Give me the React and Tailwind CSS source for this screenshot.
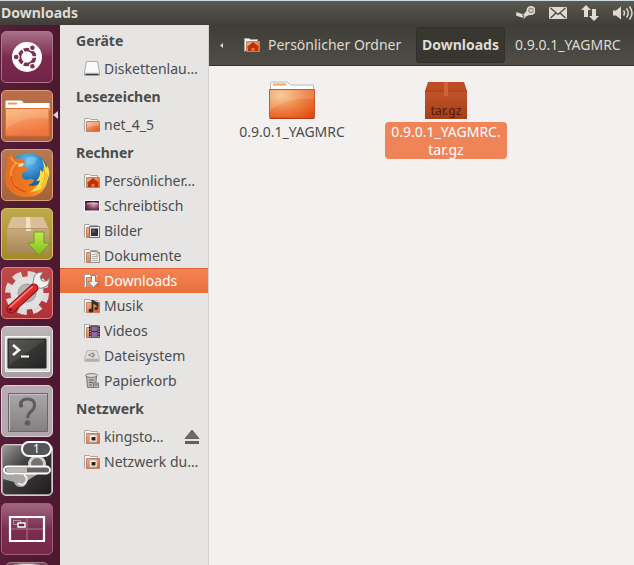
import React from "react";

/* ---------- shared gradients ---------- */

function Gradients() {
  return (
    <svg className="absolute size-0" aria-hidden="true">
      <defs>
        <radialGradient id="folderFill" cx="0.25" cy="0.2" r="1">
          <stop offset="0" stopColor="#f7c48c" />
          <stop offset="0.5" stopColor="#ee8444" />
          <stop offset="1" stopColor="#e34a12" />
        </radialGradient>
        <linearGradient id="smallFolder" x1="0" y1="0" x2="1" y2="1">
          <stop offset="0" stopColor="#f4b58a" />
          <stop offset="1" stopColor="#e2531b" />
        </linearGradient>
        <linearGradient id="launcherFolder" x1="0" y1="0" x2="0.3" y2="1">
          <stop offset="0" stopColor="#fbb775" />
          <stop offset="1" stopColor="#ef7440" />
        </linearGradient>
        <radialGradient id="foxGlobe" cx="0.5" cy="0.2" r="0.8">
          <stop offset="0" stopColor="#6ac4ee" />
          <stop offset="0.5" stopColor="#2478bd" />
          <stop offset="1" stopColor="#173d7c" />
        </radialGradient>
        <linearGradient id="foxBody" x1="0" y1="0" x2="1" y2="0">
          <stop offset="0" stopColor="#ea6c20" />
          <stop offset="0.6" stopColor="#ee7a1e" />
          <stop offset="1" stopColor="#f9c432" />
        </linearGradient>
        <linearGradient id="boxFront" x1="0" y1="0" x2="0" y2="1">
          <stop offset="0" stopColor="#cbab7b" />
          <stop offset="1" stopColor="#a98758" />
        </linearGradient>
        <linearGradient id="greenArrow" x1="0" y1="0" x2="0" y2="1">
          <stop offset="0" stopColor="#c5ea52" />
          <stop offset="1" stopColor="#7cbf1b" />
        </linearGradient>
        <linearGradient id="termFill" x1="0" y1="0" x2="1" y2="1">
          <stop offset="0" stopColor="#4a4a48" />
          <stop offset="1" stopColor="#232323" />
        </linearGradient>
        <linearGradient id="grayFill" x1="0" y1="0" x2="0" y2="1">
          <stop offset="0" stopColor="#a9a7a8" />
          <stop offset="1" stopColor="#828081" />
        </linearGradient>
        <linearGradient id="steamFill" x1="0" y1="0" x2="1" y2="1">
          <stop offset="0" stopColor="#9a9998" />
          <stop offset="0.4" stopColor="#403e3d" />
          <stop offset="1" stopColor="#1e1c1c" />
        </linearGradient>
        <linearGradient id="tarFill" x1="0" y1="0" x2="0" y2="1">
          <stop offset="0" stopColor="#c4542a" />
          <stop offset="1" stopColor="#a23f18" />
        </linearGradient>
        <radialGradient id="deskFill" cx="0.6" cy="0.4" r="0.7">
          <stop offset="0" stopColor="#d7a0b4" />
          <stop offset="0.5" stopColor="#8a4564" />
          <stop offset="1" stopColor="#3d1730" />
        </radialGradient>
      </defs>
    </svg>
  );
}

/* ---------- sidebar icons ---------- */

function Icon16({ children }) {
  return (
    <svg viewBox="0 0 16 16" className="size-4 shrink-0" aria-hidden="true">
      {children}
    </svg>
  );
}

function FolderBase({ children }) {
  return (
    <Icon16>
      <path d="M.5 14.5v-13h5l1 1h7v3" fill="#fbfaf9" stroke="#aaa5a1" />
      <path d="M2.5 4.5h13v10h-13z" fill="url(#smallFolder)" stroke="#bd8263" />
      {children}
    </Icon16>
  );
}

function HomeIcon() {
  return (
    <FolderBase>
      <path d="M3 10 9 5l6 5-1 .8V14h-3.500v-3h-3v3H4v-3.200z" fill="#b8330b" />
    </FolderBase>
  );
}

function PlainFolderIcon() {
  return (
    <FolderBase>
      <path d="M3 5h12v4q-6-1-12 2z" fill="#fff" opacity=".25" />
    </FolderBase>
  );
}

function DriveIcon() {
  return (
    <Icon16>
      <path d="M2.500 .5h11l2 10.500v3.500H.5V11z" fill="#fafafa" stroke="#aaa" />
      <path d="M1 11.500h14v3H1z" fill="#d2d1d0" />
      <path d="M1.500 13.500h13" stroke="#333" strokeWidth="1.400" />
    </Icon16>
  );
}

function DesktopIcon() {
  return (
    <Icon16>
      <path d="M.5 2.500h15v10.500H.5z" fill="url(#deskFill)" stroke="#fff" />
      <path d="M1 3.500h14" stroke="#2b1424" />
      <path d="M3 6q6-2 11 0" fill="none" stroke="#f4dbe4" opacity=".7" />
    </Icon16>
  );
}

function PicturesIcon() {
  return (
    <FolderBase>
      <path d="M5.500 3.500h10v11h-10z" fill="#e9e8e7" stroke="#77706c" />
      <path d="M7 5.500h7v7.500H7z" fill="#34313f" />
      <path d="M8 6.500h3v3H8z" fill="#5b566b" />
    </FolderBase>
  );
}

function DocumentsIcon() {
  return (
    <FolderBase>
      <path d="M6.500 3.500h6l3 3v8h-9z" fill="#f1f0ef" stroke="#928c88" />
      <path d="M12 3.500v3.500h3.500M8 6.500h3M8 8.500h6M8 10.500h6M8 12.500h6" fill="none" stroke="#b1adab" />
    </FolderBase>
  );
}

function DownloadsIcon() {
  return (
    <FolderBase>
      <path d="M7.500 2.500h4v6h3.500l-5.500 6-5.500-6h3.500z" fill="#f5f4f3" stroke="#8b8581" />
    </FolderBase>
  );
}

function MusicIcon() {
  return (
    <FolderBase>
      <path d="M8.500 12.500V3l5 2.500v4" fill="none" stroke="#2f2f2f" strokeWidth="1.800" />
      <path d="M8.500 3l5 2.500v2.500l-5-2.500z" fill="#2f2f2f" />
      <ellipse cx="7" cy="12.500" rx="2.400" ry="2" fill="#2f2f2f" />
      <ellipse cx="12.200" cy="10.500" rx="1.700" ry="1.500" fill="#2f2f2f" />
    </FolderBase>
  );
}

function VideosIcon() {
  return (
    <FolderBase>
      <path d="M5 2.500h11v12H5z" fill="#3b2d33" />
      <path d="M7.500 3.500h6v4.500h-6zM7.500 9h6v5h-6z" fill="#8e6aa0" />
      <path d="M6.200 3v12M14.800 3v12" stroke="#e6dfe2" strokeDasharray="1 1.500" />
    </FolderBase>
  );
}

function FileSystemIcon() {
  return (
    <Icon16>
      <path d="M3 2.500h10l2.500 7.500v3.500H.5V10z" fill="#dddcda" stroke="#bcbab8" />
      <path d="M.5 10.500h15v3H.5z" fill="#c5c3c1" />
      <path d="M2 12h12" stroke="#999" />
      <path d="M4.500 7 9 4.800v4.400zM9 5.500a1.500 1.500 0 1 1 0 3" fill="none" stroke="#8c8a88" />
    </Icon16>
  );
}

function TrashIcon() {
  return (
    <Icon16>
      <path d="M2.500 3h10l-1 11.500h-8z" fill="#bcbab8" stroke="#777" />
      <ellipse cx="7.500" cy="2.500" rx="6" ry="1.900" fill="#dcdbd9" stroke="#777" />
      <path d="M5 7h5M5 9.500h4M5 12h3" stroke="#666" />
      <path d="M9.500 10h5v4.500h-5z" fill="#d5d4d2" stroke="#777" />
      <path d="M10 12h5M12 10.500v3" stroke="#777" />
    </Icon16>
  );
}

function NetworkFolderIcon() {
  return (
    <FolderBase>
      <path d="M5.500 6h7.500v7H5.500z" fill="#fff" stroke="#b3b0ae" />
      <path d="M7.500 8h4v3.500h-4z" fill="#222" />
    </FolderBase>
  );
}

function EjectIcon() {
  return (
    <svg viewBox="0 0 16 16" className="size-4" aria-hidden="true">
      <path d="M8 1 15 9.500H1zM1 12h14v3H1z" fill="#6d6b69" />
      <path d="M8 1 15 9.500H1zM1.500 12.500h13v2h-13z" fill="none" stroke="#555351" strokeWidth=".8" />
    </svg>
  );
}

/* ---------- launcher ---------- */

function Art({ children }) {
  return (
    <svg viewBox="0 0 52 52" className="absolute -inset-px size-[52px] overflow-visible" aria-hidden="true">
      {children}
    </svg>
  );
}

function DashArt() {
  return (
    <Art>
      <circle cx="26" cy="26" r="15" fill="#fff" />
      <circle cx="26" cy="26" r="7.500" fill="none" stroke="#7d2f52" strokeWidth="3.600" />
      <path d="M26 26h10M26 26l-5-8.700M26 26l-5 8.700" stroke="#fff" strokeWidth="1.500" />
      <g fill="#7d2f52" stroke="#fff" strokeWidth="1.200">
        <circle cx="15.200" cy="26" r="2.900" />
        <circle cx="31.400" cy="16.700" r="2.900" />
        <circle cx="31.400" cy="35.300" r="2.900" />
      </g>
      <circle cx="26" cy="26" r="5" fill="#fff" />
    </Art>
  );
}

function FilesArt() {
  return (
    <Art>
      <path d="M4.500 20V11.500q0-1 1-1H20q1 0 1.600 1l1 1.500h25q1 0 1 1v6z" fill="#fff" />
      <path d="M7 12.500h9v2H7z" fill="#ef9a63" />
      <path d="M4.500 18.500h43.500v26.500q0 1-1 1h-41.500q-1 0-1-1z" fill="url(#launcherFolder)" stroke="#e06b35" />
      <path d="M5 19h42.500v9Q22 25 5 39z" fill="#fff" opacity=".13" />
    </Art>
  );
}

function FirefoxArt() {
  return (
    <Art>
      <circle cx="27" cy="25" r="21" fill="url(#foxGlobe)" />
      <path d="M26 9q5-3 10 0l-3 6-6 1-2 4z" fill="#9bd6f0" opacity=".4" />
      <path
        d="M6 19Q5 12 9 4q3 5 6 6 5-2 9 2-2 3-1 6l4 1q-1 4-6 5-1 6 5 7 4-2 7 0-1 4-6 5 8 3 14-4 4-6 2-16 5 9 3 18-5 14-20 14Q10 48 5 35 3 27 6 19z"
        fill="url(#foxBody)"
      />
      <path d="M41 11q3 6 1 12l-3-2q1 7-4 11l4-.5q-2 7-11 12 14-1 19-13 3-9-1-14l-1 3q-1-6-4-8.500z" fill="#fbe045" />
      <path d="M43 20q3 9-3 17M46 24q1 8-5 14" fill="none" stroke="#f3a32c" />
      <path d="M10 8q2 5 6 6-5 3-6 9-1 9 6 15" fill="none" stroke="#f8a04a" strokeWidth="1.500" />
      <path d="M17 15q4-2 6 0-1 3-5 3z" fill="#f9d9ab" />
      <path d="M10 27q1 12 15 16" fill="none" stroke="#d9521a" strokeWidth="1.500" />
    </Art>
  );
}

function PackageArt() {
  return (
    <Art>
      <path d="M11 9h31l6 12H6z" fill="#d8bf97" />
      <path d="M6 20h42v25H6z" fill="url(#boxFront)" />
      <path d="M25 9h4l1 14h-5z" fill="#efe0c3" />
      <path d="M6 20.500h42" stroke="#b8976a" />
      <path d="M33 24h10v11h6.500L38 47 26.500 35H33z" fill="url(#greenArrow)" stroke="#679f20" />
    </Art>
  );
}

function SettingsArt() {
  return (
    <Art>
      <circle cx="26" cy="26" r="18" fill="none" stroke="#dddbda" strokeWidth="8" strokeDasharray="8.500 5.640" />
      <circle cx="26" cy="26" r="13" fill="#c6c4c3" stroke="#e3e1e0" strokeWidth="7" />
      <circle cx="26" cy="26" r="9" fill="#b7b3b3" stroke="#a5a1a0" />
      <path
        d="m32 16 1-6q2-5 9-5l-3 5 2 4 5 0 2-3q1 7-4 9-4 2-7 1l-6 5-4-5z"
        fill="#f2f1f0"
        stroke="#8b8584"
      />
      <path d="M10 42 33 21" stroke="#7e1116" strokeWidth="9" strokeLinecap="round" />
      <path d="M10 42 33 21" stroke="#d92a2c" strokeWidth="7" strokeLinecap="round" />
      <path d="m9 40 22-20" stroke="#f47671" strokeWidth="2" strokeLinecap="round" />
      <circle cx="9.500" cy="42.500" r="1.700" fill="#7e1116" />
    </Art>
  );
}

function TerminalArt() {
  return (
    <Art>
      <path d="M4.500 10.500h44v35h-44z" fill="#dedddc" stroke="#f7f7f6" />
      <path d="M7 13h38v29H7z" fill="url(#termFill)" stroke="#272727" />
      <path d="M8 14h36L8 39z" fill="#fff" opacity=".08" />
      <path d="m12 19 6 5-6 5" fill="none" stroke="#fff" strokeWidth="2.500" />
      <path d="M20 30.500h8" stroke="#fff" strokeWidth="2" />
    </Art>
  );
}

function UnknownArt() {
  return (
    <Art>
      <path d="M7.500 8.500h39v38h-39z" fill="url(#grayFill)" stroke="#686667" />
      <path d="M8.500 46V9.500H46" fill="none" stroke="#c3c1c2" />
      <path
        d="M19.500 20q0-6 7-6t7 6q0 4-3.500 6.500-3 2.500-3.500 6.500"
        fill="none"
        stroke="#5e5c5d"
        strokeWidth="3"
      />
      <circle cx="20" cy="20.500" r="2.200" fill="#5e5c5d" />
      <circle cx="26.500" cy="38" r="2.800" fill="#5e5c5d" />
    </Art>
  );
}

function SteamArt() {
  return (
    <Art>
      <rect x="2" y="2" width="48" height="48" rx="3" fill="url(#steamFill)" />
      <path d="M2 24q8 1 12 7l12-2 4-9 12 7-10 6-6 4q-1 6-6 6-6 0-7-5L2 35z" fill="#aaa8a6" />
      <circle cx="36" cy="20" r="7.500" fill="#757371" stroke="#d2d0ce" strokeWidth="3" />
      <path d="M17 39q5 4 8-1 2-5-2-7" fill="none" stroke="#eceaea" strokeWidth="2" />
      <rect x="3" y="22.500" width="46" height="7" rx="3.500" fill="#666463" stroke="#fff" strokeWidth="1.800" />
      <path d="M6 23.500h20v5H6q-2-2.500 0-5z" fill="#bcbab8" />
    </Art>
  );
}

function WorkspaceArt() {
  return (
    <Art>
      <path d="M9 14h34v24H9z" fill="none" stroke="#fff" strokeWidth="2.200" />
      <path d="M26 15v22M10 26h32" stroke="#aa7a90" />
      <path d="M12.500 17.500h7v4h-7z" fill="none" stroke="#b890a2" />
      <path d="M17 20h7v4h-7z" fill="#6a2143" stroke="#fff" strokeWidth="1.400" />
    </Art>
  );
}

const launcherItems = [
  { label: "Dash", Art: DashArt, tile: "border-[#b0738b] bg-linear-to-b from-[#a8708a] via-[#7c2b4e] to-[#702447]" },
  { label: "Dateien", Art: FilesArt, tile: "border-[#dfa078] bg-linear-to-b from-[#b86f49] to-[#a9623f]", active: true },
  { label: "Firefox", Art: FirefoxArt, tile: "border-[#dda479] bg-linear-to-b from-[#b67b50] to-[#a5633a]" },
  { label: "Paketinstallation", Art: PackageArt, tile: "border-[#d8c266] bg-linear-to-b from-[#c0a94c] to-[#a38a25]" },
  { label: "Systemeinstellungen", Art: SettingsArt, tile: "border-[#e3827e] bg-linear-to-b from-[#c04a4b] to-[#ad3236]" },
  { label: "Terminal", Art: TerminalArt, tile: "border-[#e3dcdf] bg-linear-to-b from-[#bdb5b8] to-[#a89fa3]" },
  { label: "Unbekannt", Art: UnknownArt, tile: "border-[#dacdd3] bg-linear-to-b from-[#b7adb2] to-[#b3a7ad]" },
  { label: "Steam", Art: SteamArt, tile: "border-[#d5c9ce] bg-[#a2979b]", badge: "1" },
  { label: "Arbeitsflächen", Art: WorkspaceArt, tile: "border-[#a25e7b] bg-linear-to-b from-[#a06580] via-[#7c2d50] to-[#752849]" },
];

function Launcher() {
  return (
    <nav
      aria-label="Starter"
      className="flex w-[60px] shrink-0 flex-col gap-[7px] bg-linear-to-r from-[#551d37] to-[#4c1830] pt-1.5 pl-px"
    >
      {launcherItems.map(({ label, Art: Drawing, tile, active, badge }) => (
        <button
          key={label}
          type="button"
          aria-label={label}
          className={`relative size-[52px] shrink-0 rounded-[5px] border ${tile}`}
        >
          <Drawing />
          {badge && (
            <span className="absolute -top-1 right-0 flex h-4 w-[31px] items-center justify-center rounded-full border-2 border-white bg-[#555] text-xs text-white">
              {badge}
            </span>
          )}
          {active && (
            <svg viewBox="0 0 5 8" className="absolute top-5 -right-1.5 h-2 w-[5px]" aria-hidden="true">
              <path d="M5 0v8L0 4z" fill="#ddd5d8" />
            </svg>
          )}
        </button>
      ))}
      <button
        type="button"
        aria-label="Papierkorb"
        className="relative ml-1 h-[52px] w-11 shrink-0 overflow-hidden rounded-md border border-[#a9808f] bg-[#75485b]"
      >
        <svg viewBox="0 0 44 52" className="absolute -inset-px h-[52px] w-11" aria-hidden="true">
          <path d="M8 4h28l-4 46H12z" fill="#b9b5b6" />
          <ellipse cx="22" cy="4" rx="14" ry="2.500" fill="#e5e3e3" stroke="#8c8587" />
        </svg>
      </button>
    </nav>
  );
}

/* ---------- top panel ---------- */

function SteamIndicator() {
  return (
    <svg viewBox="0 0 20 16" className="h-4 w-5" aria-hidden="true">
      <path d="M11.500 6 8.500 9.500 1.500 7 1 10.500l5.500 2Q9.500 15 11 11.500L16.500 9z" fill="#dfdbd2" />
      <circle cx="16" cy="5.500" r="3.700" fill="#8d8a82" stroke="#dfdbd2" strokeWidth="1.800" />
      <circle cx="16" cy="5.500" r="1.800" fill="#c9c5bb" />
      <path d="M7 10q2.500 0 2 2-1 1.500-2.500.5" fill="none" stroke="#55534c" />
    </svg>
  );
}

function MailIndicator() {
  return (
    <svg viewBox="0 0 18 12" className="h-3 w-[18px]" aria-hidden="true">
      <rect width="18" height="12" rx="1" fill="#dfdbd2" />
      <path d="m1.500 1 7.500 6.500L16.500 1M1.500 11 7 6M16.500 11 11 6" fill="none" stroke="#45433e" strokeWidth="1.300" />
    </svg>
  );
}

function NetworkIndicator() {
  return (
    <svg viewBox="0 0 18 16" className="h-4 w-[18px]" aria-hidden="true">
      <path d="M5 0l5 5H7v7H3V5H0zM11 4h4v7h3l-5 5-5-5h3z" fill="#dfdbd2" />
    </svg>
  );
}

function SoundIndicator() {
  return (
    <svg viewBox="0 0 21 16" className="h-4 w-[21px]" aria-hidden="true">
      <path d="M0 5.500h3L8 1.500v13l-5-4H0z" fill="#dfdbd2" />
      <path d="M10.500 5.500q2 2.500 0 5M13.500 3.500q3.500 4.500 0 9M16.500 1.500q5 6.500 0 13" fill="none" stroke="#dfdbd2" strokeWidth="1.500" />
    </svg>
  );
}

const indicators = [
  { label: "Steam", Icon: SteamIndicator },
  { label: "Nachrichten", Icon: MailIndicator },
  { label: "Netzwerk", Icon: NetworkIndicator },
  { label: "Lautstärke", Icon: SoundIndicator },
];

function TopPanel() {
  return (
    <header className="flex h-[25px] shrink-0 items-center justify-between border-t border-[#cfdbe0] bg-linear-to-b from-[#5a5851] to-[#403e39] pl-px">
      <h1 className="text-sm font-bold text-[#dfdbd2]">Downloads</h1>
      <div className="flex items-center gap-3.5">
        {indicators.map(({ label, Icon }) => (
          <button key={label} type="button" aria-label={label}>
            <Icon />
          </button>
        ))}
      </div>
    </header>
  );
}

/* ---------- sidebar ---------- */

const sections = [
  { title: "Geräte", items: [{ label: "Diskettenlau…", Icon: DriveIcon }] },
  { title: "Lesezeichen", items: [{ label: "net_4_5", Icon: PlainFolderIcon }] },
  {
    title: "Rechner",
    items: [
      { label: "Persönlicher…", Icon: HomeIcon },
      { label: "Schreibtisch", Icon: DesktopIcon },
      { label: "Bilder", Icon: PicturesIcon },
      { label: "Dokumente", Icon: DocumentsIcon },
      { label: "Downloads", Icon: DownloadsIcon, selected: true },
      { label: "Musik", Icon: MusicIcon },
      { label: "Videos", Icon: VideosIcon },
      { label: "Dateisystem", Icon: FileSystemIcon },
      { label: "Papierkorb", Icon: TrashIcon },
    ],
  },
  {
    title: "Netzwerk",
    items: [
      { label: "kingsto…", Icon: NetworkFolderIcon, eject: true },
      { label: "Netzwerk du…", Icon: NetworkFolderIcon },
    ],
  },
];

function Sidebar() {
  return (
    <aside className="w-[149px] shrink-0 border-r border-[#d2d0ce] bg-[#e6e5e4]">
      {sections.map(({ title, items }) => (
        <section key={title}>
          <h2 className="flex h-[31px] items-center pl-4 text-sm font-bold">{title}</h2>
          <ul>
            {items.map(({ label, Icon, selected, eject }) => (
              <li
                key={label}
                className={`flex h-[25px] items-center pr-2 pl-6 ${
                  selected
                    ? "border-t border-[#d9622f] bg-linear-to-b from-[#f58255] to-[#e96f3c] text-white"
                    : ""
                }`}
              >
                <a href="#" className="flex flex-1 items-center gap-1 whitespace-nowrap">
                  <Icon />
                  {label}
                </a>
                {eject && (
                  <button type="button" aria-label="Auswerfen">
                    <EjectIcon />
                  </button>
                )}
              </li>
            ))}
          </ul>
        </section>
      ))}
    </aside>
  );
}

/* ---------- main area ---------- */

function PathBar() {
  return (
    <div className="flex h-[41px] shrink-0 items-center overflow-hidden border-b border-[#37352f] bg-linear-to-b from-[#3e3d38] to-[#504e47] whitespace-nowrap text-[#dfdbd2]">
      <button type="button" aria-label="Zurück" className="flex h-9 w-6 shrink-0 items-center justify-center">
        <svg viewBox="0 0 3 5" className="h-[5px] w-[3px]" aria-hidden="true">
          <path d="M3 0v5L0 2.500z" fill="#dfdbd2" />
        </svg>
      </button>
      <button type="button" className="flex h-9 w-[183px] shrink-0 items-center gap-2 pl-[11px]">
        <HomeIcon />
        Persönlicher Ordner
      </button>
      <button
        type="button"
        className="h-9 w-[89px] shrink-0 rounded-[3px] border border-[#302f2b] bg-[#37362f] text-center font-bold"
      >
        Downloads
      </button>
      <button type="button" className="h-9 shrink-0 px-2.5">
        0.9.0.1_YAGMRC
      </button>
    </div>
  );
}

function FolderArt() {
  return (
    <svg viewBox="0 0 48 40" className="h-10 w-12" aria-hidden="true">
      <path d="M2.500 12V3q0-1 1-1H19l4 3h22.500v7z" fill="#fcfcfb" stroke="#bab8b6" />
      <path d="M5 3.500h13v2H5z" fill="#eda168" />
      <path d="M1.500 9.500h45V38h-45z" fill="url(#folderFill)" stroke="#cf5a26" />
      <path d="M2 10h44v9q-24-3-44 11z" fill="#fff" opacity=".14" />
      <path d="M2 38.500h44" stroke="#b23a10" />
    </svg>
  );
}

function ArchiveArt() {
  return (
    <svg viewBox="0 0 48 40" className="h-10 w-12" aria-hidden="true">
      <path d="M6 2h36l3 9H3z" fill="#bf4d23" />
      <path d="M3 10.500h42V39H3z" fill="url(#tarFill)" />
      <path d="M3 11h42" stroke="#9c3c18" />
      <path d="M22 2h4v14h-4z" fill="#d16437" />
      <text x="24" y="35" textAnchor="middle" fontSize="12" fontWeight="500" fill="#5a1f08">
        tar.gz
      </text>
    </svg>
  );
}

function Files() {
  return (
    <div className="flex flex-1 flex-wrap content-start bg-[#f2f1f0] pt-3.5 pl-1.5">
      <button type="button" className="flex w-[154px] flex-col items-center gap-0.5">
        <FolderArt />
        <span className="px-1.5 pt-px leading-[18px]">0.9.0.1_YAGMRC</span>
      </button>
      <button type="button" className="flex w-[154px] flex-col items-center gap-0.5">
        <ArchiveArt />
        <span className="rounded-[4px] bg-[#f08459] px-1.5 pt-px leading-[18px] text-white">
          0.9.0.1_YAGMRC.
          <br />
          tar.gz
        </span>
      </button>
    </div>
  );
}

export default function App() {
  return (
    <div className="flex h-screen flex-col overflow-hidden font-['Noto_Sans','Open_Sans',sans-serif] text-sm text-[#4c4c4c]">
      <Gradients />
      <TopPanel />
      <div className="flex min-h-0 flex-1">
        <Launcher />
        <Sidebar />
        <main className="flex min-w-0 flex-1 flex-col">
          <PathBar />
          <Files />
        </main>
      </div>
    </div>
  );
}
